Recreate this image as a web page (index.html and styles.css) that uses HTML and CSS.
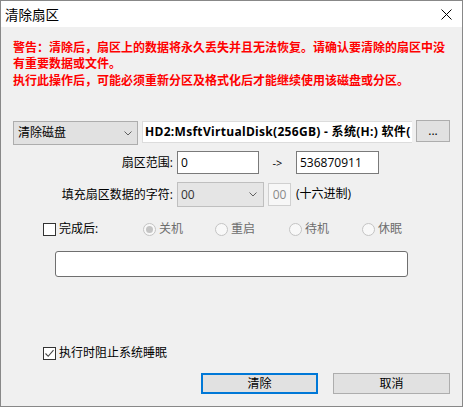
FILE: index.html
```html
<!DOCTYPE html>
<html lang="zh-CN">
<head>
<meta charset="utf-8">
<title>清除扇区</title>
<link rel="stylesheet" href="styles.css">
</head>
<body>
<div class="window">
  <div class="titlebar">
    <span class="title">清除扇区</span>
    <svg class="close" width="11" height="11" viewBox="0 0 11 11"><path d="M0.5 0.5L10.5 10.5M10.5 0.5L0.5 10.5" stroke="#000" stroke-width="1" fill="none"/></svg>
  </div>
  <div class="content">
    <div class="warning">
      <p>警告：清除后，扇区上的数据将永久丢失并且无法恢复。请确认要清除的扇区中没有重要数据或文件。</p>
      <p class="p2">执行此操作后，可能必须重新分区及格式化后才能继续使用该磁盘或分区。</p>
    </div>

    <div class="row row-disk">
      <div class="combo combo-mode"><span>清除磁盘</span><svg class="chev" width="8" height="5" viewBox="0 0 8 5"><path d="M0.5 0.5L4 4L7.5 0.5" stroke="#606060" fill="none"/></svg></div>
      <div class="diskfield"><span class="disktext">HD2:MsftVirtualDisk(256GB) - 系统(H:) 软件(</span></div>
      <button class="btn btn-browse">...</button>
    </div>

    <div class="row row-range">
      <label class="lbl">扇区范围:</label>
      <div class="input input-from">0</div>
      <span class="arrow">-&gt;</span>
      <div class="input input-to">536870911</div>
    </div>

    <div class="row row-fill">
      <label class="lbl">填充扇区数据的字符:</label>
      <div class="combo combo-fill disabled"><span>00</span><svg class="chev" width="8" height="5" viewBox="0 0 8 5"><path d="M0.5 0.5L4 4L7.5 0.5" stroke="#606060" fill="none"/></svg></div>
      <div class="hexbox">00</div>
      <span class="hexnote">(十六进制)</span>
    </div>

    <div class="row row-after">
      <div class="chk-group"><span class="checkbox"></span><span class="chk-label">完成后:</span></div>
      <div class="radio r1"><span class="circle checked"></span><span>关机</span></div>
      <div class="radio r2"><span class="circle"></span><span>重启</span></div>
      <div class="radio r3"><span class="circle"></span><span>待机</span></div>
      <div class="radio r4"><span class="circle"></span><span>休眠</span></div>
    </div>

    <div class="statusbox"></div>

    <div class="row row-nosleep">
      <span class="checkbox"><svg width="11" height="11" viewBox="0 0 11 11"><path d="M1.5 5.5L4.2 8.3L9.5 2.2" stroke="#444" stroke-width="1.1" fill="none"/></svg></span>
      <span class="chk-label">执行时阻止系统睡眠</span>
    </div>

    <div class="row row-buttons">
      <button class="btn btn-primary">清除</button>
      <button class="btn btn-cancel">取消</button>
    </div>
  </div>
</div>
</body>
</html>
```

FILE: styles.css
```css
* {
  box-sizing: border-box;
  margin: 0;
  padding: 0;
}

body {
  margin: 0;
  width: 463px;
  height: 407px;
  overflow: hidden;
  background: #f0f0f0;
  font-family: "Open Sans", "Noto Sans CJK SC", sans-serif;
  font-size: 12px;
  color: #000;
}

.window {
  width: 463px;
  height: 407px;
  border: 1px solid #888888;
  display: flex;
  flex-direction: column;
  background: #f0f0f0;
}

.titlebar {
  height: 26px;
  flex: none;
  background: #fff;
  display: flex;
  align-items: center;
  padding-left: 4px;
}

.title {
  font-size: 13.5px;
  line-height: 26px;
  font-family: "Noto Sans CJK SC", sans-serif;
}

.close {
  margin-left: auto;
  margin-right: 10px;
}

.content {
  flex: 1;
  padding: 12px 0 0 12px;
}

.warning {
  width: 440px;
  color: #ff0000;
  font-weight: bold;
  font-family: "Noto Sans CJK SC", sans-serif;
  line-height: 16px;
}

.warning .p2 {
  margin-top: 1px;
}

.row {
  display: flex;
  align-items: center;
}

.row-disk {
  margin-top: 33px;
  align-items: flex-start;
}

.combo {
  display: flex;
  align-items: center;
  background: #e1e1e1;
  border: 1px solid #adadad;
  line-height: 20px;
  white-space: nowrap;
}

.combo .chev {
  margin-left: auto;
}

.combo-mode {
  width: 125px;
  height: 24px;
  padding-left: 4px;
  padding-right: 5px;
}

.diskfield {
  margin-left: 4px;
  width: 270px;
  height: 22px;
  background: #fff;
  border: 1px solid #dcdcdc;
  border-right: none;
  font-weight: bold;
  line-height: 20px;
  padding-left: 2px;
  white-space: nowrap;
  overflow: hidden;
}

.disktext {
  letter-spacing: 0.3px;
}

.btn {
  font-family: "Open Sans", "Noto Sans CJK SC", sans-serif;
  font-size: 12px;
  color: #000;
  background: #e1e1e1;
  border: 1px solid #adadad;
  display: flex;
  align-items: center;
  justify-content: center;
}

.btn-browse {
  margin-left: 4px;
  margin-top: -1px;
  width: 34px;
  height: 22px;
  line-height: 18px;
}

.lbl {
  width: 160px;
  text-align: right;
  line-height: 20px;
  white-space: nowrap;
  margin-right: 4px;
}

.row-range {
  margin-top: 6px;
}

.input {
  height: 23px;
  background: #fff;
  border: 1px solid #7a7a7a;
  line-height: 21px;
  padding-left: 3px;
}

.input-from {
  width: 82px;
}

.arrow {
  width: 37px;
  text-align: center;
  font-size: 11px;
  line-height: 20px;
}

.input-to {
  width: 83px;
}

.row-fill {
  margin-top: 8px;
  height: 25px;
}

.combo-fill {
  width: 87px;
  height: 25px;
  padding-left: 3px;
  padding-right: 6px;
  background: #e5e5e5;
  border-color: #bfbfbf;
  color: #333;
}

.hexbox {
  margin-left: 4px;
  width: 23px;
  height: 23px;
  border: 1px solid #d0d0d0;
  background: #f7f7f7;
  color: #8a8a8a;
  text-align: center;
  line-height: 21px;
}

.hexnote {
  margin-left: 5px;
  line-height: 20px;
  margin-top: -2px;
}

.row-after {
  margin-top: 15px;
  height: 14px;
  padding-left: 30px;
}

.chk-group {
  width: 100px;
  display: flex;
  align-items: center;
}

.checkbox {
  width: 13px;
  height: 13px;
  border: 1px solid #333;
  background: #fff;
  display: flex;
  align-items: center;
  justify-content: center;
  flex: none;
}

.chk-label {
  margin-left: 3px;
  line-height: 16px;
  white-space: nowrap;
}

.radio {
  display: flex;
  align-items: center;
  color: #6d6d6d;
  line-height: 16px;
  white-space: nowrap;
}

.radio .circle {
  width: 13px;
  height: 13px;
  border: 1px solid #c4c4c4;
  border-radius: 50%;
  background: #f8f8f8;
  margin-right: 3px;
  display: flex;
  align-items: center;
  justify-content: center;
}

.radio .circle.checked::after {
  content: "";
  width: 7px;
  height: 7px;
  border-radius: 50%;
  background: #c4c4c4;
}

.r1 { width: 72px; }
.r2 { width: 74px; }
.r3 { width: 73px; }

.statusbox {
  margin-top: 15px;
  margin-left: 42px;
  width: 353px;
  height: 26px;
  background: #fff;
  border: 1px solid #6f6f6f;
  border-radius: 3px;
}

.row-nosleep {
  margin-top: 69px;
  height: 14px;
  padding-left: 30px;
}

.row-buttons {
  margin-top: 13px;
  padding-left: 188px;
  gap: 15px;
}

.btn-primary {
  width: 117px;
  height: 21px;
  border: 2px solid #0078d7;
  line-height: 16px;
}

.btn-cancel {
  width: 117px;
  height: 21px;
  line-height: 18px;
}
```
